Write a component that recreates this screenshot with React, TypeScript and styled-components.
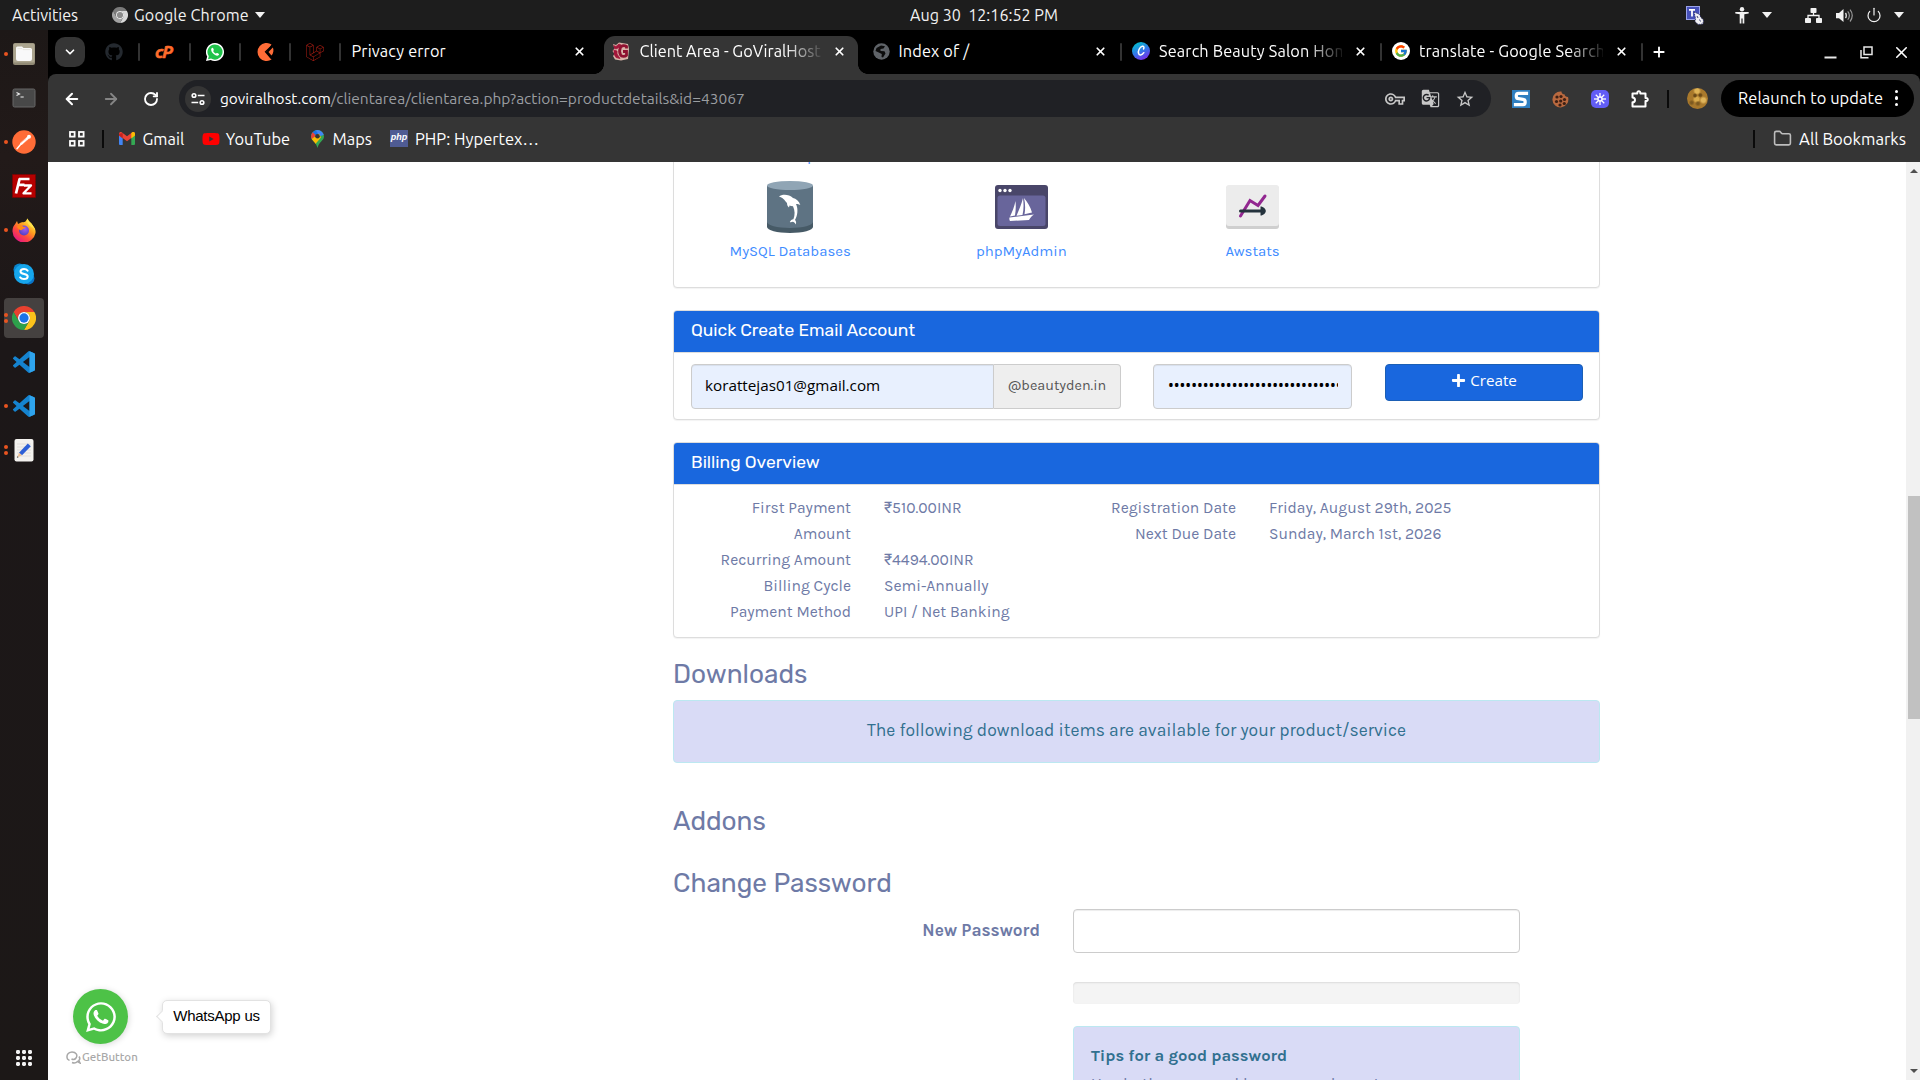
import React from 'react';
import styled, { createGlobalStyle, css } from 'styled-components';
import { FaGithub, FaWhatsapp, FaYoutube, FaPlus } from 'react-icons/fa';
import { SiLaravel } from 'react-icons/si';
import { FcGoogle } from 'react-icons/fc';
import { MdGTranslate, MdOutlineVpnKey, MdStarBorder } from 'react-icons/md';
import { ArrowLeft, ArrowRight, RotateCw, ChevronDown, X, Plus, Folder, Power } from 'lucide-react';

const ui = '"Ubuntu", "Noto Sans", sans-serif';
const body = '"Karla", "Roboto", sans-serif';
const head = '"Rubik", "Roboto", sans-serif';

const Global = createGlobalStyle`
  *, *::before, *::after { box-sizing: border-box; }
  html, body { margin: 0; padding: 0; overflow: hidden; background: #fff; }
  svg { display: block; flex: none; }
`;

const Desktop = styled.div`
  width: 1920px;
  height: 1080px;
  display: flex;
  flex-direction: column;
  overflow: hidden;
  font-family: ${ui};
`;

/* ---------- GNOME top bar ---------- */
const TopBar = styled.header`
  height: 30px;
  flex: none;
  display: grid;
  grid-template-columns: 1fr auto 1fr;
  align-items: center;
  padding: 0 12px 0 12px;
  background: #1d1d1d;
  color: #f2f2f2;
  font-size: 16.1px;
  white-space: pre;
`;
const BarLeft = styled.div`display: flex; align-items: center;`;
const AppMenu = styled.div`
  display: flex; align-items: center; gap: 6px; margin-left: 34px; letter-spacing: 0.15px;
`;
const Clock = styled.div`margin-left: 48px;`;
const BarRight = styled.div`
  display: flex; align-items: center; justify-content: flex-end; padding-right: 4px;
`;
const Caret = styled.span<{ $ml: number }>`
  margin-left: ${p => p.$ml}px;
  border: 5px solid transparent;
  border-top: 6px solid #f2f2f2;
  border-bottom: 0;
`;
const Gap = styled.span<{ $w: number }>`width: ${p => p.$w}px; flex: none;`;

/* ---------- Dock ---------- */
const Below = styled.div`flex: 1; display: flex; min-height: 0;`;
const Dock = styled.nav`
  width: 48px; flex: none;
  display: flex; flex-direction: column; align-items: center;
  padding: 2px 0 14px;
  background: linear-gradient(180deg, #1d1817 0%, #221a19 12%, #1c1718 30%, #1c1817 100%);
`;
const DockSlot = styled.div<{ $active?: boolean }>`
  position: relative;
  width: 40px; height: 40px; margin: 2px 0; border-radius: 4px;
  display: flex; align-items: center; justify-content: center;
  background: ${p => (p.$active ? '#454140' : 'transparent')};
`;
const Dots = styled.div`
  position: absolute; left: 0; top: 0; height: 100%;
  display: flex; flex-direction: column; justify-content: center; gap: 2px;
  i { width: 4px; height: 4px; border-radius: 50%; background: #e95420; }
`;
const AppGrid = styled.div`
  margin-top: auto;
  display: grid; grid-template-columns: repeat(3, 4px); gap: 2px;
  i { width: 4px; height: 4px; border-radius: 1.4px; background: #f3f3f3; }
`;

/* ---------- Browser ---------- */
const Browser = styled.main`flex: 1; display: flex; flex-direction: column; min-width: 0; background: #000;`;
const Strip = styled.div`
  height: 44px; flex: none; display: flex; align-items: flex-end; padding-left: 7px; color: #fff;
`;
const TabSearch = styled.div`
  width: 30px; height: 30px; margin: 0 4px 7px 0; border-radius: 10px; background: #353535;
  display: flex; align-items: center; justify-content: center;
`;
const separator = css`
  &::after {
    content: ''; position: absolute; right: -1px; top: 6px; width: 2px; height: 18px; background: #333; border-radius: 1px;
  }
`;
const Pinned = styled.div`
  position: relative; width: 50.3px; height: 30px; margin-bottom: 7px;
  display: flex; align-items: center; justify-content: center;
  ${separator}
`;
const CPanelMark = styled.span`
  font: italic 700 17px/18px ${ui}; letter-spacing: -1px; color: #ff6c2c; -webkit-text-stroke: 0.6px #ff6c2c; padding-right: 2px;
`;
const Tab = styled.div<{ $w: number; $active?: boolean; $sep?: boolean; $pad?: number }>`
  position: relative; flex: none;
  width: ${p => p.$w}px; height: ${p => (p.$active ? 38 : 30)}px;
  margin-bottom: ${p => (p.$active ? 0 : 7)}px;
  padding: 0 ${p => (p.$active ? 8 : 11)}px ${p => (p.$active ? 8 : 2)}px ${p => p.$pad ?? 11}px;
  display: flex; align-items: center; gap: ${p => (p.$active ? 9 : 8.5)}px;
  font-size: 16.3px; letter-spacing: ${p => (p.$active ? 0 : 0.15)}px;
  ${p => p.$active && css`
    background: #353535; border-radius: 11px 11px 0 0;
    &::before, &::after {
      content: ''; position: absolute; bottom: 0; width: 10px; height: 10px;
    }
    &::before { left: -10px; background: radial-gradient(circle at 0 0, transparent 9.6px, #353535 10.2px); }
    &::after { right: -10px; background: radial-gradient(circle at 100% 0, transparent 9.6px, #353535 10.2px); }
  `}
  ${p => p.$sep && separator}
`;
const TabTitle = styled.span<{ $fade?: boolean }>`
  flex: 1; min-width: 0; overflow: hidden; white-space: nowrap;
  ${p => p.$fade && css`mask-image: linear-gradient(90deg, #000 calc(100% - 36px), rgba(0, 0, 0, 0.1));`}
`;
const Close = styled.span<{ $mr?: number }>`
  width: 20px; height: 20px; flex: none; display: flex; align-items: center; justify-content: center; margin-right: ${p => p.$mr ?? 0}px;
`;
const NewTab = styled.div`width: 34px; height: 30px; margin-bottom: 7px; display: flex; align-items: center; justify-content: center;`;
const WindowButtons = styled.div`
  margin-left: auto; height: 30px; margin-bottom: 7px; padding-right: 9px;
  display: grid; grid-template-columns: 36px 32px 19px; align-items: center;
`;
const Chrome = styled.div`height: 88px; flex: none; background: #353535; border-radius: 8px 8px 0 0; color: #fff;`;
const Toolbar = styled.div`height: 49px; padding: 0 6px 0 16px; display: flex; align-items: center;`;
const NavButton = styled.span<{ $ml?: number }>`
  width: 16px; height: 16px; margin-left: ${p => p.$ml ?? 0}px; display: flex; align-items: center; justify-content: center;
`;
const Omnibox = styled.div`
  width: 1312px; height: 37px; margin-left: 20px; border-radius: 19px; background: #202125;
  display: flex; align-items: center; padding: 0 16px 0 6px; color: #9a9da1; white-space: nowrap; font-size: 15.5px;
  b { font-weight: 400; color: #fff; font-size: 15.4px; }
`;
const SiteInfo = styled.span`
  width: 26px; height: 26px; border-radius: 50%; margin-right: 9px; background: #353535;
  display: flex; align-items: center; justify-content: center;
`;
const OmniIcons = styled.span`margin-left: auto; display: flex; align-items: center; gap: 15.5px; color: #c7c7c7;`;
const Extensions = styled.div`
  margin-left: 21px; display: flex; align-items: center; gap: 21.8px;
`;
const VRule = styled.span<{ $ml: number; $mr: number }>`
  width: 2px; height: 18px; background: #0a0a0a; margin: 0 ${p => p.$mr}px 0 ${p => p.$ml}px;
`;
const Avatar = styled.span`
  width: 21px; height: 21px; border-radius: 50%;
  background:
    radial-gradient(circle at 38% 36%, #6b4a18 0 1px, transparent 2.5px),
    radial-gradient(circle at 64% 34%, #6b4a18 0 1px, transparent 2.5px),
    radial-gradient(circle at 52% 74%, #7d5a20 0 1px, transparent 3px),
    radial-gradient(circle at 22% 70%, #7d5a20 0 1px, transparent 3px),
    radial-gradient(circle at 48% 14%, #e0b456 0 2px, transparent 4px),
    radial-gradient(circle at 78% 58%, #dfb45a 0 2px, transparent 4px),
    radial-gradient(circle at 46% 54%, #d9ab4c 0 2px, transparent 4px),
    #a9792c;
`;
const Relaunch = styled.div`
  margin-left: auto; width: 193px; height: 37px; border-radius: 19px; background: #000; padding: 0 16px 1px 17px;
  display: flex; align-items: center; justify-content: space-between; font-size: 16.4px; white-space: nowrap; letter-spacing: 0.08px;
`;
const Kebab = styled.span`
  display: flex; flex-direction: column; gap: 3px;
  i { width: 3.5px; height: 3.5px; border-radius: 50%; background: #fff; }
`;
const Bookmarks = styled.div`height: 32px; padding: 0 14px 1px 21px; display: flex; align-items: center;`;
const Bookmark = styled.span<{ $ml: number; $fs?: number; $gap?: number }>`
  display: flex; align-items: center; gap: ${p => p.$gap ?? 7}px; margin-left: ${p => p.$ml}px; font-size: ${p => p.$fs ?? 16.4}px;
  white-space: nowrap;
`;
const BookmarksEnd = styled.span`
  margin-left: auto; display: flex; align-items: center; font-size: 16.7px;
  svg { margin-right: 7px; }
`;
const PhpBadge = styled.span`
  width: 18px; height: 17px; background: #4f5b93; display: flex; align-items: center; justify-content: center;
  font: italic 700 9px/1 "Liberation Sans", sans-serif; padding-bottom: 2px;
`;

/* ---------- Page ---------- */
const Viewport = styled.section`
  position: relative; flex: 1; min-height: 0; display: flex; background: #fff; overflow: hidden;
`;
const Page = styled.div`flex: 1; overflow: hidden; padding-left: 625px; color: #6e7aa6; font-family: ${body};`;
const Column = styled.div`width: 927px; margin-top: -52px;`;
const Card = styled.section`
  border: 1px solid #ddd; border-radius: 4px; box-shadow: 0 1px 1px rgba(0, 0, 0, 0.05); margin-bottom: 22px; background: #fff;
`;
const CardHead = styled.h3`
  margin: 0; height: 42px; padding: 0 17px 3px; border-bottom: 1px solid #ddd; border-radius: 3px 3px 0 0;
  background: #1967de; color: #fff; display: flex; align-items: center;
  font: 400 17.45px/20px ${head};
`;
const Shortcuts = styled.div`
  height: 176px; display: grid; grid-template-columns: repeat(4, 1fr); grid-template-rows: 55px 95px;
`;
const Shortcut = styled.a`
  display: flex; flex-direction: column; align-items: center; justify-content: flex-end;
  color: #3f8cff; font-size: 14.95px; line-height: 20px; padding-left: 1px;
`;
const IconBox = styled.span`height: 54px; display: flex; align-items: center; margin-bottom: 7px;`;
const EmailForm = styled.form`
  height: 66px; padding: 11px 16px 0 17px; display: flex; align-items: flex-start;
`;
const inputBox = css`
  height: 45px; border: 1px solid #ccc; box-shadow: inset 0 1px 1px rgba(0, 0, 0, 0.075); display: flex; align-items: center;
`;
const EmailInput = styled.div`
  ${inputBox} width: 303px; background: #e8f0fe; border-radius: 4px 0 0 4px; color: #000;
  font: 15.25px "Open Sans", "Noto Sans", sans-serif; padding: 0 13px 3px;
`;
const Domain = styled.div`
  height: 45px; width: 127px; border: 1px solid #ccc; border-left: 0; border-radius: 0 4px 4px 0; background: #eee; color: #555;
  display: flex; align-items: center; justify-content: center; font-size: 14.4px; padding-bottom: 2px;
`;
const SecretInput = styled.div`
  ${inputBox} width: 199px; margin-left: 32px; padding: 0 13px 2px 14px; background: #e8f0fe; border-radius: 4px; color: #000;
  span { overflow: hidden; white-space: nowrap; font: 15.4px "Noto Sans", sans-serif; }
`;
const CreateButton = styled.div`
  margin-left: auto; width: 198px; height: 37px; border-radius: 4px; border: 1px solid #1b5fb5; background: #1967de; color: #fff;
  display: flex; align-items: center; justify-content: center; gap: 4px; font: 15.2px "Open Sans", sans-serif; padding-bottom: 5px;
`;
const Billing = styled.div`height: 152px; padding-top: 10px; display: grid; grid-template-columns: 395px 1fr; align-items: start;`;
const Facts = styled.dl<{ $label: number }>`
  margin: 0; display: grid; grid-template-columns: ${p => p.$label}px 1fr; column-gap: 33px;
  font-size: 15.7px; line-height: 26px;
  dt { text-align: right; }
  dd { margin: 0; white-space: nowrap; }
`;
const Heading = styled.h3<{ $mt: number; $mb?: number }>`
  margin: ${p => p.$mt}px 0 ${p => p.$mb ?? 11}px; font: 400 26.2px/29px ${head};
`;
const Info = styled.div`
  border: 1px solid #bce8f1; border-radius: 4px; background: #d9dbf6; color: #31708f;
`;
const DownloadsInfo = styled(Info)`
  height: 63px; padding-bottom: 3px; display: flex; align-items: center; justify-content: center; font-size: 17.5px;
`;
const PasswordRow = styled.div`display: grid; grid-template-columns: 367px 447px; column-gap: 33px;`;
const PasswordLabel = styled.label`
  padding-top: 9px; text-align: right; font: 700 17.3px/24px ${body};
`;
const PasswordInput = styled.div`${inputBox} height: 44px; border-radius: 4px; background: #fff;`;
const Meter = styled.div`
  height: 22px; margin: 29px 0 22px; border-radius: 4px; background: #f4f4f4; box-shadow: inset 0 1px 2px rgba(0, 0, 0, 0.1);
`;
const Tips = styled(Info)`
  height: 180px; padding: 16px 17px; font-size: 16.6px; line-height: 26px; white-space: nowrap;
  strong { display: block; }
  p { margin: 2px 0 0; color: #6e7aa6; }
`;

const Scrollbar = styled.div`
  width: 14px; flex: none; background: #f1f1f1; display: flex; flex-direction: column; align-items: flex-end; padding: 7px 0;
`;
const Arrow = styled.i<{ $down?: boolean }>`
  width: 0; height: 0; margin-right: 2px; border: 4px solid transparent;
  ${p => (p.$down ? 'border-top: 4px solid #505050; border-bottom: 0;' : 'border-bottom: 4px solid #505050; border-top: 0;')}
`;
const Thumb = styled.div`width: 12px; height: 223px; margin: 323px 0 auto; background: #c1c1c1;`;

/* floating chat widget */
const Widget = styled.aside`
  position: absolute; left: 14px; bottom: 14px; display: grid; grid-template-columns: 76px auto; column-gap: 24px; align-items: center;
`;
const Bubble = styled.div`
  width: 55px; height: 55px; margin: 0 0 0 11px; border-radius: 50%; background: #4dc247; color: #fff;
  box-shadow: 1px 1px 6px rgba(0, 0, 0, 0.15); display: flex; align-items: center; justify-content: center;
`;
const Callout = styled.div`
  position: relative; width: 109px; height: 34px; border: 1px solid #e2e2e2; border-radius: 5px; background: #fff; color: #000;
  box-shadow: 1px 2px 7px rgba(0, 0, 0, 0.18); display: flex; align-items: center; justify-content: center; white-space: nowrap;
  font: 15px "Liberation Sans", Arial, sans-serif; letter-spacing: -0.25px; padding-bottom: 2px;
  &::before {
    content: ''; position: absolute; left: -5.5px; top: 11px; width: 9px; height: 9px; background: #fff;
    border: 1px solid #e2e2e2; border-width: 0 0 1px 1px; transform: rotate(45deg);
  }
`;
const Powered = styled.div`
  width: 76px; height: 18px; margin-top: 4px; display: flex; align-items: center; gap: 1px; padding-left: 4px; color: #a8a8a8;
  font: 500 11.5px/18px "Ubuntu", "Open Sans", sans-serif;
`;

/* ---------- Drawings ---------- */
const ChromeLogo = ({ size, grey }: { size: number; grey?: boolean }) => {
  const c = grey ? ['#7a7a7a', '#d8d8d8', '#a2a2a2', '#efefef', '#8b8b8b'] : ['#e8412f', '#fcc21b', '#2da04b', '#fff', '#1a73e8'];
  return (
    <svg width={size} height={size} viewBox="0 0 48 48">
      <path fill={c[0]} d="M24 12H44.8A24 24 0 0 0 3.2 12L13.6 30A12 12 0 0 1 24 12Z" />
      <path fill={c[1]} d="M34.4 30L24 48A24 24 0 0 0 44.8 12H24A12 12 0 0 1 34.4 30Z" />
      <path fill={c[2]} d="M13.6 30L3.2 12A24 24 0 0 0 24 48L34.4 30A12 12 0 0 1 13.6 30Z" />
      <circle cx="24" cy="24" r="12" fill={c[3]} />
      <circle cx="24" cy="24" r="9.3" fill={c[4]} />
    </svg>
  );
};
const Files = () => (
  <svg width="24" height="24" viewBox="0 0 24 24">
    <rect x="1" y="1" width="22" height="22" rx="2" fill="#918a75" />
    <rect x="1.5" y="1.5" width="21" height="19" rx="1.5" fill="#aca58f" />
    <path d="M4 6a1.5 1.5 0 0 1 1.500-1.500H10l1.500 1.500H18.500A1.500 1.500 0 0 1 20 7.500V17a2 2 0 0 1-2 2H6a2 2 0 0 1-2-2Z" fill="#f9f9f9" />
    <path d="M5.500 6.600H10l1 1h7.500" stroke="#e2dfd6" strokeWidth="0.7" fill="none" />
  </svg>
);
const Terminal = () => (
  <svg width="24" height="20" viewBox="0 0 24 20">
    <rect x="1" y="1" width="22" height="18" rx="1.5" fill="#484848" stroke="#666" />
    <path d="M4.500 4.500l3 1.500-3 1.500M8.500 9h3.200" stroke="#f2f2f2" strokeWidth="1.100" fill="none" />
  </svg>
);
const Postman = () => (
  <svg width="24" height="24" viewBox="0 0 24 24">
    <circle cx="12" cy="12" r="11.700" fill="#ff6c37" />
    <circle cx="17" cy="6.700" r="2" fill="#fff" />
    <path d="M15.500 8.200L9.500 13.500" stroke="#fff" strokeWidth="2.600" strokeLinecap="round" />
    <path d="M9 14L5 18.700" stroke="#fff" strokeWidth="1.500" strokeLinecap="round" />
    <path d="M9 12.500l5-4M10.500 14.500l5-4.500" stroke="#ff8d63" strokeWidth="0.500" />
  </svg>
);
const FileZilla = () => (
  <svg width="24" height="24" viewBox="0 0 24 24">
    <rect x="0.500" y="0.500" width="23" height="23" fill="#b50000" stroke="#7c0000" strokeDasharray="1.500 1.200" />
    <path d="M7 5H17.500M6 10.800H12.500M7.700 4.500L4 19.500" stroke="#fff" strokeWidth="2.700" fill="none" />
    <path d="M12 11.500H19L11.500 19.300H19.500" stroke="#fff" strokeWidth="2.300" fill="none" strokeLinejoin="round" />
  </svg>
);
const Firefox = () => (
  <svg width="24" height="24" viewBox="0 0 24 24">
    <defs>
      <linearGradient id="fx" x1="0.850" y1="0.100" x2="0.200" y2="0.950">
        <stop offset="0" stopColor="#fff44f" /><stop offset="0.350" stopColor="#ffa01e" />
        <stop offset="0.650" stopColor="#ff4a3d" /><stop offset="1" stopColor="#e31587" />
      </linearGradient>
      <radialGradient id="fp" cx="0.600" cy="0.350" r="0.700"><stop offset="0" stopColor="#a45cf0" /><stop offset="1" stopColor="#4a3fc0" /></radialGradient>
    </defs>
    <path fill="url(#fx)" d="M3.500 5.500L5 3l1 3 3-1.500c1.500-.5 3 0 4.500-1L15.500.5c1 3 3.500 4 5 6.500 2 3 3.500 4.500 3 8A11.600 11.600 0 0 1 .5 13.500C.3 10 1.500 8 3.500 5.500Z" />
    <circle cx="12" cy="12.500" r="5" fill="url(#fp)" />
    <path d="M5 8.500c2-2 5-1.500 6.500.5 1-.3 2 0 2.300.8-1.500 1-3 1-4 2.200-1.300 1-3-.2-4.800-3.500Z" fill="#ff8a16" />
    <path d="M15.500.5c1 3 3.500 4 5 6.500 1.200 2 2.500 3.500 2.800 5.500-1-2-2.300-3-3.600-3.300C17.500 7 14.500 6 15.500.5Z" fill="#ffe34a" />
  </svg>
);
const Skype = () => (
  <svg width="24" height="24" viewBox="0 0 24 24">
    <circle cx="7.500" cy="7.500" r="6" fill="#0a84cc" /><circle cx="16.500" cy="16.500" r="6" fill="#0a74c8" />
    <circle cx="12" cy="12" r="10" fill="#16a6ec" />
    <path d="M15.600 8.600c-.8-1-2-1.500-3.600-1.500-2 0-3.500 1-3.500 2.500 0 3.400 7.200 1.600 7.200 4.900 0 1.500-1.500 2.500-3.700 2.500-1.700 0-3-.5-3.900-1.600" stroke="#fff" strokeWidth="2" fill="none" strokeLinecap="round" />
  </svg>
);
const VsCode = () => (
  <svg width="22" height="22" viewBox="0 0 24 24">
    <path fill="#1583cf" d="M23.150 2.587L18.210.210a1.494 1.494 0 0 0-1.705.290l-9.460 8.630-4.120-3.128a.999.999 0 0 0-1.276.057L.327 7.261A1 1 0 0 0 .326 8.740L3.899 12 .326 15.260a1 1 0 0 0 .001 1.479L1.650 17.940a.999.999 0 0 0 1.276.057l4.120-3.128 9.460 8.630a1.492 1.492 0 0 0 1.704.290l4.942-2.377A1.500 1.500 0 0 0 24 20.060V3.939a1.500 1.500 0 0 0-.850-1.352zm-5.146 14.861L10.826 12l7.178-5.448v10.896z" />
    <path fill="#2fa4ee" d="M18 .200L23.150 2.587A1.500 1.500 0 0 1 24 3.939V20.060a1.500 1.500 0 0 1-.850 1.352L18 23.800Z" />
  </svg>
);
const Editor = () => (
  <svg width="20" height="24" viewBox="0 0 20 24">
    <rect x="0.500" y="1" width="19" height="22.500" rx="2" fill="#f3f1ee" />
    <path d="M3 6h14M3 9h14M3 12h14M3 15h14M3 18h14" stroke="#dcd9d4" strokeWidth="0.800" />
    <path d="M13.800 5.500l3 2.700L8 17.300l-3-2.600Z" fill="#2d5fd6" />
    <path d="M5 14.700l3 2.600-4.500 2Z" fill="#edbf95" /><path d="M3.400 18.200l1.200 1-1.700.6Z" fill="#333" />
  </svg>
);
const Globe = () => (
  <svg width="17" height="17" viewBox="0 0 17 17">
    <circle cx="8.500" cy="8.500" r="8.200" fill="#5f6368" />
    <path d="M8 2.500l4 .8-1.500 2.200-3 .5v2l4 .3 1 2.200-2.500 4-1.500-.5.3-3-3-1.500L2.500 8l1-3Z" fill="#0c0c0c" />
  </svg>
);
const GoViral = () => (
  <svg width="18" height="19" viewBox="0 0 18 19">
    <path d="M1 2l3 1L7 .500l9 1.500 1 5-1 10-7 1.500-6-1L1 14l1.500-2L.5 9l2-2.500Z" fill="#d9b5aa" />
    <path d="M1.500 3.500l2.500 1L7 2l2 1-3 3-2 1-2-1M1.500 8l3.500 1v3l3 4.500-4-1L2 12" fill="#a3163a" stroke="#a3163a" strokeWidth="0.800" />
    <path d="M14.500 6.500V4.500c-2-1.300-5-1-6 .8-1 2-1 5.500 0 7.600 1 2 4.500 2 6 .3V9.500H11" stroke="#8f1231" strokeWidth="2.800" fill="none" />
  </svg>
);
const Canva = () => (
  <svg width="18" height="18" viewBox="0 0 18 18">
    <defs><linearGradient id="cv" x1="0.200" y1="0" x2="0.700" y2="1"><stop offset="0" stopColor="#00c4cc" /><stop offset="0.500" stopColor="#2f7be8" /><stop offset="1" stopColor="#7d2ae8" /></linearGradient></defs>
    <circle cx="9" cy="9" r="9" fill="url(#cv)" />
    <path d="M11.500 7c1-1.500.3-3-1.200-2.700C7.500 5 5.800 9 6.600 11.500c.6 2.300 3.500 2 5.200-.8" stroke="#fff" strokeWidth="1.500" fill="none" strokeLinecap="round" />
  </svg>
);
const GoogleBadge = styled.span`
  width: 18px; height: 18px; border-radius: 50%; background: #fff; display: flex; align-items: center; justify-content: center;
`;
const OrangeMark = () => (
  <svg width="17" height="18" viewBox="0 0 17 18">
    <path d="M14.500 1.500A9 9 0 1 0 14.500 16.500L9.500 9.300Z" fill="#ff6c37" />
    <path d="M15.500 2.200L8.700 8.800l5.500 6.500" stroke="#000" strokeWidth="1.600" fill="none" />
    <path d="M15.800 4.500L11.500 9l3 3.600c2-2 2.500-6 1.300-8.100Z" fill="#ff6c37" />
  </svg>
);
const WhatsAppTab = () => (
  <svg width="18" height="18" viewBox="0 0 18 18">
    <path d="M9 0a9 9 0 1 1-4.300 16.900L0 18l1.200-4.500A9 9 0 0 1 9 0Z" fill="#fff" />
    <path d="M9 1.400a7.600 7.600 0 1 1-4 14.100l-3 .7.800-2.900A7.600 7.600 0 0 1 9 1.400Z" fill="#1fc34a" />
    <path d="M6.300 4.800c-2 1-1 4 .8 5.800s4.500 3 5.800 1.200c.5-.8 0-1-1.600-1.800-.8-.4-1 .9-1.700.6-1-.5-1.900-1.400-2.300-2.300-.2-.6.800-.9.400-1.800-.5-1.200-.6-2-1.400-1.700Z" fill="#fff" />
  </svg>
);
const Gmail = () => (
  <svg width="16" height="13" viewBox="0 0 16 13">
    <path d="M0 2v10a1 1 0 0 0 1 1h2.700V5Z" fill="#4285f4" /><path d="M16 2v10a1 1 0 0 1-1 1h-2.700V5Z" fill="#34a853" />
    <path d="M0 3.500V1.800C0 .2 1.700-.500 3 .500L8 4.300l5-3.800c1.300-1 3-.3 3 1.300L12.300 6 8 9.300 3.700 6Z" fill="#ea4335" />
    <path d="M0 1.800v1.700l3.700 2.900V1Z" fill="#c5221f" /><path d="M12.300 1v5.400L16 3.500V1.800C16 .2 14.300-.500 13 .500Z" fill="#fbbc04" />
  </svg>
);
const Pin = () => (
  <svg width="13" height="18" viewBox="0 0 13 18">
    <defs><clipPath id="pin"><path d="M6.500 0A6.500 6.500 0 0 1 13 6.500C13 10.500 7.800 12 6.500 18 5.200 12 0 10.500 0 6.500A6.500 6.500 0 0 1 6.500 0Z" /></clipPath></defs>
    <g clipPath="url(#pin)">
      <rect width="13" height="18" fill="#34a853" /><path d="M4 -1H13V5L9 6 5 4Z" fill="#4285f4" />
      <path d="M0 0h4.500L7 3.500 3.500 7 0 4.500Z" fill="#1a73e8" />
      <path d="M-1 3.500L1.500 2 5 5.500 1 9.500-1 8Z" fill="#ea4335" /><path d="M0 12V9.500l8-6 2 4-6.500 7.500Z" fill="#fbbc04" />
    </g>
    <circle cx="6.500" cy="6.300" r="2.300" fill="#353535" />
  </svg>
);
const AppsGrid = () => (
  <svg width="16" height="16" viewBox="0 0 16 16" fill="none" stroke="#fff" strokeWidth="1.800">
    <rect x="1" y="1" width="4.600" height="4.600" /><rect x="10" y="1" width="4.600" height="4.600" />
    <rect x="1" y="10" width="4.600" height="4.600" /><rect x="10" y="10" width="4.600" height="4.600" />
  </svg>
);
const Tune = () => (
  <svg width="14" height="14" viewBox="0 0 14 14" fill="none" stroke="#fff" strokeWidth="1.600">
    <circle cx="3" cy="3.500" r="1.800" /><path d="M6.800 3.500H13.500M.5 10.500H7.200" /><circle cx="11" cy="10.500" r="1.800" />
  </svg>
);
const ExtS = () => (
  <svg width="18" height="18" viewBox="0 0 18 18">
    <rect width="18" height="18" fill="#2f7fc0" />
    <path d="M14.500 5V3.300H6.500C3.500 3.300 3.500 8.500 6.500 8.700l4.500.6c3 .4 2.800 5.400 0 5.400H3.500V13" stroke="#fff" strokeWidth="3.200" fill="none" />
  </svg>
);
const Cookie = () => (
  <svg width="17" height="18" viewBox="0 0 17 18">
    <path d="M9.500 1c0 2 1.500 3 3 2.800.3 1.700 1.500 2.700 3.500 2.700A8 8 0 1 1 9.500 1Z" fill="#b9693f" transform="translate(0 .5)" />
    {[[5, 7], [9, 6.5], [4.5, 11.5], [8.7, 11], [12.5, 9.5], [8, 15], [12.3, 13.5]].map(([x, y]) => (
      <circle key={`${x}-${y}`} cx={x} cy={y} r="1.600" fill="#3c1f14" />
    ))}
  </svg>
);
const Loom = () => (
  <svg width="18" height="18" viewBox="0 0 18 18">
    <rect width="18" height="18" rx="5" fill="#625df5" />
    <g stroke="#fff" strokeWidth="1.300">
      {[0, 45, 90, 135].map(a => <path key={a} d="M9 3V15" transform={`rotate(${a} 9 9)`} />)}
    </g>
    <circle cx="9" cy="9" r="2.700" fill="#fff" /><circle cx="9" cy="9" r="1.300" fill="#625df5" />
  </svg>
);
const Puzzle = () => (
  <svg width="20" height="20" viewBox="0 0 20 20">
    <path d="M2.500 4.500H7.300C6.600 1.600 11 1.600 10.300 4.500H15.500V9C18.500 8.300 18.500 12.700 15.500 12V17.500H2.500V13.300C5.800 13.300 5.800 8.500 2.500 8.500Z" fill="none" stroke="#fff" strokeWidth="2" strokeLinejoin="round" />
  </svg>
);
const TrayTranslate = () => (
  <svg width="18" height="19" viewBox="0 0 18 19">
    <rect x="0.500" y="0.500" width="13" height="13" fill="#4650b8" stroke="#9aa2e8" />
    <path d="M3 3.800h6M6 3.800V10.500" stroke="#fff" strokeWidth="1.800" />
    <path d="M8 6l3.500 1.500 2 1 1.500 3 2.500 2.500-.5 4-5 .5-3-3 .5-3Z" fill="#f0f0f4" stroke="#2b2f66" strokeWidth="0.900" strokeDasharray="1.500 1" />
    <path d="M11 10l1 2M13.500 13.500l1 2" stroke="#2b2f66" strokeWidth="0.900" />
  </svg>
);
const Person = () => (
  <svg width="14" height="17" viewBox="0 0 14 17" fill="#f2f2f2">
    <circle cx="7" cy="2.200" r="2.200" /><path d="M.3 5H13.700V6.600L9.300 7.200V16.500H7.600V11.500H6.400V16.500H4.700V7.200L.3 6.600Z" />
  </svg>
);
const Network = () => (
  <svg width="17" height="15" viewBox="0 0 17 15" fill="#f2f2f2">
    <rect x="5.500" y="0" width="6" height="5" rx="0.800" /><rect x="0" y="10" width="6" height="5" rx="0.800" /><rect x="11" y="10" width="6" height="5" rx="0.800" />
    <path d="M8.500 4.500V7.500M3 10.500V7.500H14V10.500" stroke="#f2f2f2" strokeWidth="1.300" fill="none" />
  </svg>
);
const Volume = () => (
  <svg width="17" height="15" viewBox="0 0 17 15">
    <path d="M0 5h3L7.500 1v13L3 10.200H0Z" fill="#f2f2f2" />
    <path d="M9.500 5c1 1.200 1 3.800 0 5" stroke="#f2f2f2" strokeWidth="1.300" fill="none" />
    <path d="M11.700 3.400c2.200 2.300 2.200 6 0 8.300M14 1.600c3 3.500 3 8.400 0 11.900" stroke="#9a9a9a" strokeWidth="1.200" fill="none" />
  </svg>
);
const Minimize = () => (
  <svg width="13" height="14" viewBox="0 0 13 14"><path d="M0.500 12.500H12.500" stroke="#e8e8e8" strokeWidth="2" /></svg>
);
const Restore = () => (
  <svg width="13" height="13" viewBox="0 0 13 13" fill="none" stroke="#e8e8e8" strokeWidth="1.500">
    <rect x="4" y="1" width="8" height="7.500" /><path d="M1 4V11.800H8.500" />
  </svg>
);
const MySql = () => (
  <svg width="46" height="52" viewBox="0 0 46 52">
    <path d="M0 5V46c0 3 10 6 23 6s23-3 23-6V5Z" fill="#465a66" />
    <path d="M0 5V41c0 3 10 6 23 6s23-3 23-6V5Z" fill="#5e7383" />
    <ellipse cx="23" cy="4.500" rx="23" ry="4.500" fill="#90a5b5" />
    <path d="M12 15.500C15 13 22 13 26 17c3 .8 6 3 7.300 7-2.500-1-3-1.300-4.300-1 2.500 5 1.500 12-1 16 1 1 1.500 2.500.8 4.500-1-1.800-2-2.700-3-2.700-1 .3-2 .8-3 .2.800-1.800 2-2.600 3.600-2.800 1.700-4 1.600-9-.4-13-1.500-.2-2.500-.4-3.500-.8l-.5 2c-1.500-1-2-3-2-4.500-2-1.500-2.500-4.500-8-6.400Z" fill="#fff" />
  </svg>
);
const PhpMyAdmin = () => (
  <svg width="53" height="44" viewBox="0 0 53 44">
    <rect width="53" height="44" rx="3" fill="#494669" /><rect x="2.500" y="10.500" width="48" height="30.500" rx="2.500" fill="#68659b" />
    <circle cx="5" cy="5.500" r="1.700" fill="#fff" /><circle cx="10" cy="5.500" r="1.700" fill="#fff" /><circle cx="15" cy="5.500" r="1.700" fill="#fff" />
    <path d="M20.500 16c.5 5 .3 10-.5 14.500l-5 1C17 27 19.500 21.500 20.500 16ZM28 13c.8 6 .8 12-.5 17l-6 .7C24 25 26.500 19 28 13ZM29 13c3.500 4 6.500 9 8 14.500l-7.500 1.800C30.500 24 30.300 18 29 13ZM14.500 32.500l24.500-3c-2 1-3.500 3-5 5.500l-19 1c-.7-1-.8-2.500-.5-3.500Z" fill="#fff" />
  </svg>
);
const Awstats = () => (
  <svg width="53" height="44" viewBox="0 0 53 44">
    <rect y="1" width="53" height="43" rx="3" fill="#cfcfcf" /><rect width="53" height="41" rx="3" fill="#ececec" />
    <path d="M14.500 31L24 15.500l8 5L39 11" stroke="#922790" strokeWidth="3" fill="none" strokeLinecap="round" />
    <path d="M14.500 26H36" stroke="#25333d" strokeWidth="3" strokeLinecap="round" /><path d="M34.500 21.500c3 0 5.300 2.500 5.300 4.500s-2.300 4.500-5.300 4.500Z" fill="#25333d" />
  </svg>
);
const GetButtonMark = () => (
  <svg width="15" height="13" viewBox="0 0 15 13" fill="none" stroke="#a8a8a8" strokeWidth="1.500">
    <path d="M3.500 9.500L1.500 8C0 4.500 2 1 6 1s6 3 4 6c-1 1.500-3 1.700-4.500 1" /><path d="M6 11.500c2 .8 4.500 0 5.500-1l2.500 1.500-1.200-2.500C14 8.500 14 7 13 5.500" />
  </svg>
);

const dock: { icon: React.ReactNode; dots: number; active?: boolean }[] = [
  { icon: <Files />, dots: 1 }, { icon: <Terminal />, dots: 0 }, { icon: <Postman />, dots: 1 }, { icon: <FileZilla />, dots: 0 },
  { icon: <Firefox />, dots: 1 }, { icon: <Skype />, dots: 0 }, { icon: <ChromeLogo size={24} />, dots: 2, active: true },
  { icon: <VsCode />, dots: 0 }, { icon: <VsCode />, dots: 1 }, { icon: <Editor />, dots: 2 },
];
const CloseX = ({ mr }: { mr?: number }) => <Close $mr={mr}><X size={13} strokeWidth={3.2} /></Close>;

export default function App() {
  return (
    <Desktop>
      <Global />
      <TopBar>
        <BarLeft>
          Activities
          <AppMenu><ChromeLogo size={16} grey />Google Chrome<Caret $ml={0} /></AppMenu>
        </BarLeft>
        <Clock>Aug 30  12:16:52 PM</Clock>
        <BarRight>
          <TrayTranslate /><Gap $w={31} /><Person /><Caret $ml={13} />
          <Gap $w={33} /><Network /><Gap $w={14} /><Volume /><Gap $w={13} /><Power size={16} strokeWidth={1.8} /><Caret $ml={12} />
        </BarRight>
      </TopBar>
      <Below>
        <Dock>
          {dock.map((d, i) => (
            <DockSlot key={i} $active={d.active}>
              <Dots>{Array.from({ length: d.dots }, (_, n) => <i key={n} />)}</Dots>
              {d.icon}
            </DockSlot>
          ))}
          <AppGrid>{Array.from({ length: 9 }, (_, n) => <i key={n} />)}</AppGrid>
        </Dock>
        <Browser>
          <Strip>
            <TabSearch><ChevronDown size={14} strokeWidth={3} /></TabSearch>
            <Pinned><FaGithub size={18} color="#24292f" /></Pinned>
            <Pinned><CPanelMark>cP</CPanelMark></Pinned>
            <Pinned><WhatsAppTab /></Pinned>
            <Pinned><OrangeMark /></Pinned>
            <Pinned><SiLaravel size={18} color="#a81d13" /></Pinned>
            <Tab $w={264}><TabTitle>Privacy error</TabTitle><CloseX mr={4} /></Tab>
            <Tab $w={253.5} $active $pad={8}><GoViral /><TabTitle $fade>Client Area - GoViralHost</TabTitle><CloseX /></Tab>
            <Tab $w={263.5} $sep $pad={15}><Globe /><TabTitle>Index of /</TabTitle><CloseX /></Tab>
            <Tab $w={260} $sep><Canva /><TabTitle $fade>Search Beauty Salon Hom</TabTitle><CloseX /></Tab>
            <Tab $w={261} $sep><GoogleBadge><FcGoogle size={14} /></GoogleBadge><TabTitle $fade>translate - Google Search</TabTitle><CloseX /></Tab>
            <NewTab><Plus size={16} strokeWidth={2.8} /></NewTab>
            <WindowButtons><Minimize /><Restore /><X size={19} strokeWidth={2} /></WindowButtons>
          </Strip>
          <Chrome>
            <Toolbar>
              <NavButton><ArrowLeft size={18} strokeWidth={2.7} /></NavButton>
              <NavButton $ml={23}><ArrowRight size={18} strokeWidth={2.4} color="#858585" /></NavButton>
              <NavButton $ml={24}><RotateCw size={16} strokeWidth={2.8} /></NavButton>
              <Omnibox>
                <SiteInfo><Tune /></SiteInfo>
                <b>goviralhost.com</b>/clientarea/clientarea.php?action=productdetails&amp;id=43067
                <OmniIcons><MdOutlineVpnKey size={20} /><MdGTranslate size={19} /><MdStarBorder size={20} /></OmniIcons>
              </Omnibox>
              <Extensions><ExtS /><Cookie /><Loom /><Puzzle /></Extensions>
              <VRule $ml={17} $mr={18} />
              <Avatar />
              <Relaunch>Relaunch to update<Kebab><i /><i /><i /></Kebab></Relaunch>
            </Toolbar>
            <Bookmarks>
              <AppsGrid />
              <VRule $ml={17} $mr={0} />
              <Bookmark $ml={15} $gap={7.500}><Gmail />Gmail</Bookmark>
              <Bookmark $ml={17.500} $gap={6}><FaYoutube size={18} color="#ff0000" />YouTube</Bookmark>
              <Bookmark $ml={20.500} $gap={9}><Pin />Maps</Bookmark>
              <Bookmark $ml={18} $gap={7} $fs={16.500}><PhpBadge>php</PhpBadge>PHP: Hypertex…</Bookmark>
              <BookmarksEnd><VRule $ml={0} $mr={18} /><Folder size={19} strokeWidth={2} color="#bdbdbd" />All Bookmarks</BookmarksEnd>
            </Bookmarks>
          </Chrome>
          <Viewport>
            <Page>
              <Column>
                <Card>
                  <Shortcuts>
                    <Shortcut>Backup</Shortcut><i /><i /><i />
                    <Shortcut><IconBox><MySql /></IconBox>MySQL Databases</Shortcut>
                    <Shortcut><IconBox><PhpMyAdmin /></IconBox>phpMyAdmin</Shortcut>
                    <Shortcut><IconBox><Awstats /></IconBox>Awstats</Shortcut>
                  </Shortcuts>
                </Card>
                <Card>
                  <CardHead>Quick Create Email Account</CardHead>
                  <EmailForm>
                    <EmailInput>korattejas01@gmail.com</EmailInput>
                    <Domain>@beautyden.in</Domain>
                    <SecretInput><span>{'•'.repeat(31)}</span></SecretInput>
                    <CreateButton><FaPlus size={15} />Create</CreateButton>
                  </EmailForm>
                </Card>
                <Card>
                  <CardHead>Billing Overview</CardHead>
                  <Billing>
                    <Facts $label={177}>
                      <dt>First Payment<br />Amount</dt><dd>₹510.00INR</dd>
                      <dt>Recurring Amount</dt><dd>₹4494.00INR</dd>
                      <dt>Billing Cycle</dt><dd>Semi-Annually</dd>
                      <dt>Payment Method</dt><dd>UPI / Net Banking</dd>
                    </Facts>
                    <Facts $label={167}>
                      <dt>Registration Date</dt><dd>Friday, August 29th, 2025</dd>
                      <dt>Next Due Date</dt><dd>Sunday, March 1st, 2026</dd>
                    </Facts>
                  </Billing>
                </Card>
                <Heading $mt={22}>Downloads</Heading>
                <DownloadsInfo>The following download items are available for your product/service</DownloadsInfo>
                <Heading $mt={44}>Addons</Heading>
                <Heading $mt={33} $mb={11}>Change Password</Heading>
                <PasswordRow>
                  <PasswordLabel>New Password</PasswordLabel>
                  <div>
                    <PasswordInput />
                    <Meter />
                    <Tips>
                      <strong>Tips for a good password</strong>
                      <p>Use both upper and lowercase characters</p>
                    </Tips>
                  </div>
                </PasswordRow>
              </Column>
            </Page>
            <Scrollbar><Arrow /><Thumb /><Arrow $down /></Scrollbar>
            <Widget>
              <Bubble><FaWhatsapp size={34} /></Bubble>
              <Callout>WhatsApp us</Callout>
              <Powered><GetButtonMark />GetButton</Powered>
            </Widget>
          </Viewport>
        </Browser>
      </Below>
    </Desktop>
  );
}
